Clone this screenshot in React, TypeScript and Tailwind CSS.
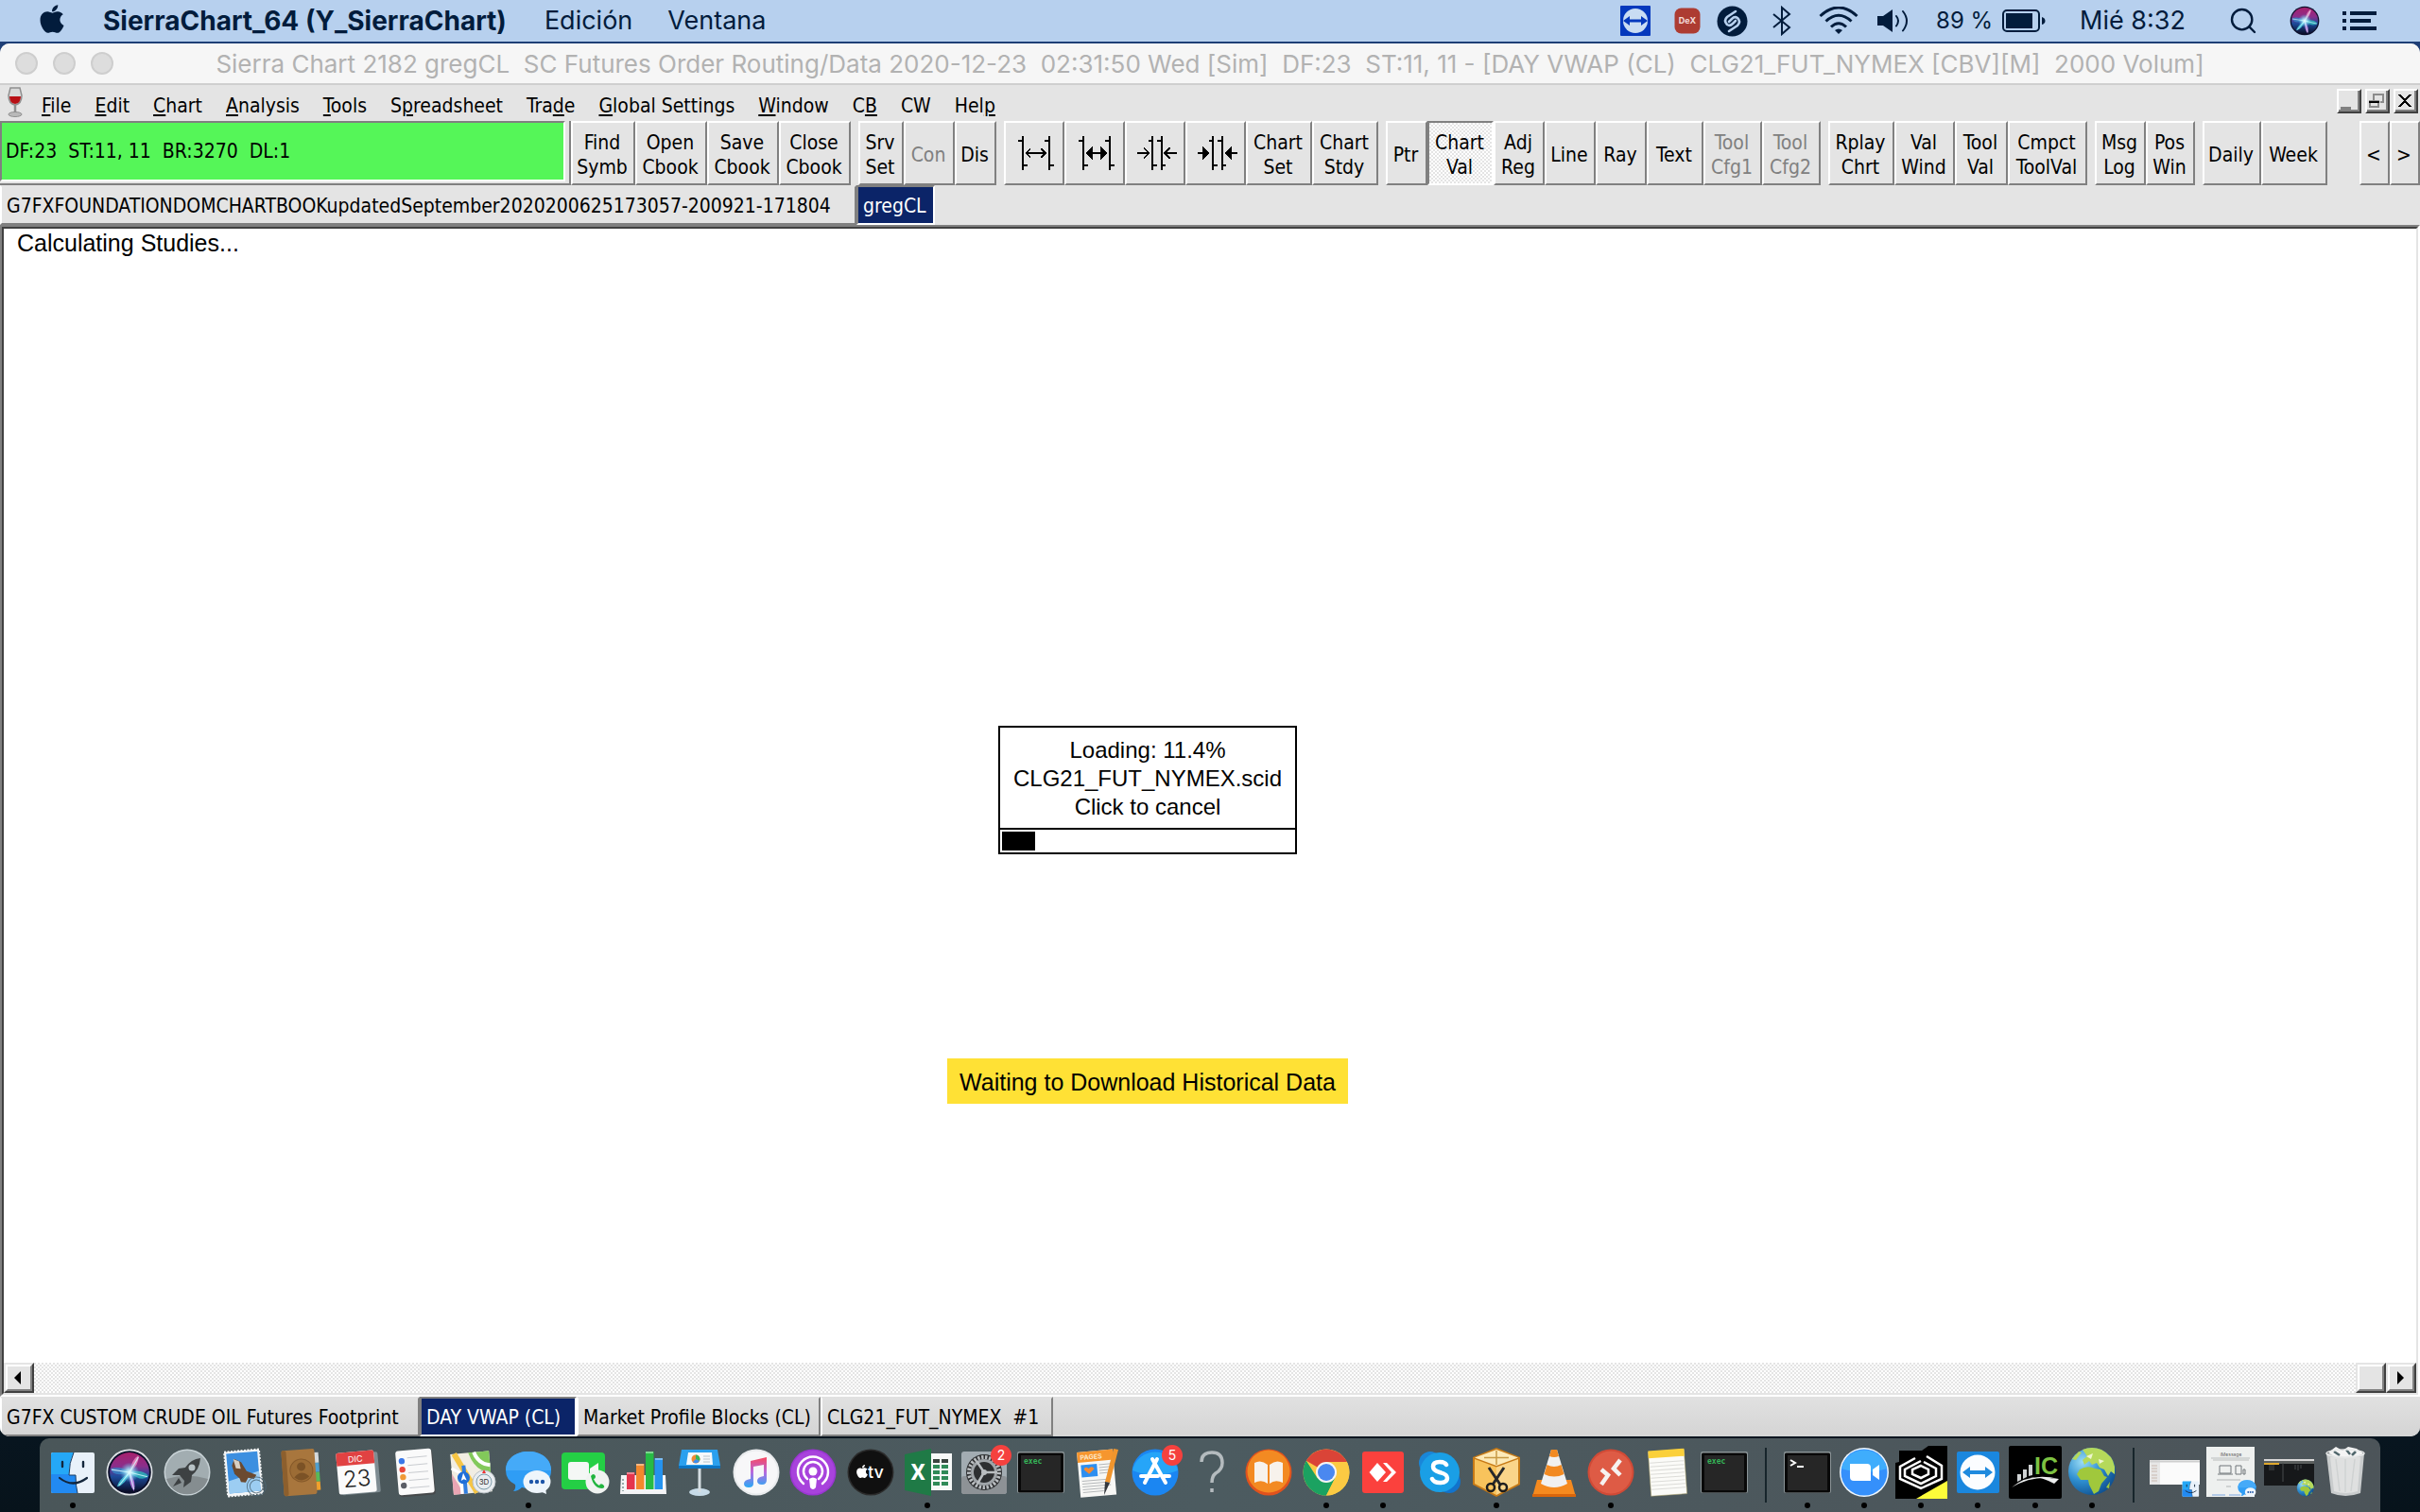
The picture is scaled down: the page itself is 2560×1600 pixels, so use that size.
import React from 'react';
import { FaApple } from 'react-icons/fa';
import { Search } from 'lucide-react';

const UI = "font-['DejaVu_Sans_Condensed','DejaVu_Sans',sans-serif]";
const MAC = "font-['Inter',sans-serif]";
const ARIAL = "font-['Liberation_Sans',Arial,sans-serif]";
const DITHER = 'bg-[conic-gradient(#ffffff_25%,#e4e4e4_0_50%,#ffffff_0_75%,#e4e4e4_0)] bg-[length:4px_4px]';

/* ---------- shared drawings ---------- */

const SiriOrb = ({ id, ring = '#0b0f2a' }: { id: string; ring?: string }) => (
  <>
    <defs>
      <linearGradient id={id} x1="0" y1="0" x2="0" y2="1">
        <stop offset="0" stopColor="#a81f6c" />
        <stop offset="0.35" stopColor="#8a2f8c" />
        <stop offset="0.6" stopColor="#1d4c9c" />
        <stop offset="1" stopColor="#0a0c26" />
      </linearGradient>
      <radialGradient id={`${id}Glow`}>
        <stop offset="0" stopColor="#ffffff" />
        <stop offset="0.35" stopColor="#aef2ff" stopOpacity="0.8" />
        <stop offset="1" stopColor="#58c8f0" stopOpacity="0" />
      </radialGradient>
    </defs>
    <circle cx="30" cy="30" r="24" fill={ring} />
    <circle cx="30" cy="30" r="22" fill={`url(#${id})`} />
    <path d="M30 30 Q20 22 9 26 Q12 36 30 30Z" fill="#2f9fd8" opacity="0.6" />
    <path d="M30 30 Q44 26 51 34 Q44 42 30 30Z" fill="#2fc8bf" opacity="0.7" />
    <path d="M30 30 Q32 16 40 11 Q41 22 30 30Z" fill="#f08fc4" opacity="0.8" />
    <path d="M30 30 Q18 38 16 46 Q26 44 30 30Z" fill="#4ad8e8" opacity="0.8" />
    <path d="M30 30 Q29 44 35 51 Q38 40 30 30Z" fill="#c77be8" opacity="0.85" />
    <circle cx="30" cy="30" r="11" fill={`url(#${id}Glow)`} />
    <path d="M10 27 L30 30 L50 35 M18 45 L30 30 L40 13 M30 30 L35 49" fill="none" stroke="#d8fbff" strokeWidth="1.200" opacity="0.8" />
  </>
);

const FinderFace = () => (
  <>
    <rect x="7" y="9" width="46" height="43" rx="2" fill="#e9f1fa" />
    <path d="M9 9 H31 Q26 20 26 33 H33 Q33 44 35 52 H9 Q7 52 7 50 V11 Q7 9 9 9Z" fill="#25a8f7" />
    <path d="M7 32 H26 V33 H33 Q33 44 35 52 H9 Q7 52 7 50Z" fill="#2277ee" opacity="0.6" />
    <path d="M31 9 Q26 20 26 33 H33 Q33 44 35 52" fill="none" stroke="#1d3d63" strokeWidth="1" />
    <path d="M19 19 V24 M41 19 V24" stroke="#13263c" strokeWidth="2.4" strokeLinecap="round" />
    <path d="M16 36 Q30 47 45 36" fill="none" stroke="#13263c" strokeWidth="2.2" strokeLinecap="round" />
  </>
);

const Globe = () => (
  <>
    <defs>
      <radialGradient id="sea" cx="0.3" cy="0.3" r="0.8">
        <stop offset="0" stopColor="#9adcf6" />
        <stop offset="0.5" stopColor="#2f8fd0" />
        <stop offset="1" stopColor="#0d4c8c" />
      </radialGradient>
    </defs>
    <circle cx="30" cy="29" r="25" fill="url(#sea)" />
    <path d="M20 6 Q30 2 40 6 Q52 12 54 24 L54 32 L50 29 L47 34 L43 27 L38 25 L35 20 L30 22 L27 18 L22 22 L20 17 L25 13Z" fill="#b5d95a" />
    <path d="M9 16 L16 8 L19 9 L13 17Z" fill="#b5d95a" />
    <path d="M17 27 Q25 22 33 26 L39 27 L43 34 L46 35 L40 42 L37 50 L32 53 L27 43 L26 38 L18 38 L14 32Z" fill="#a0c83c" />
    <path d="M45 46 L49 40 L48 47Z" fill="#a0c83c" />
    <path d="M24 13 L31 10 L29 16Z M37 16 L43 18 L38 21Z" fill="#eef6cf" />
  </>
);

const ExecIcon = () => (
  <>
    <rect x="5" y="8" width="50" height="44" rx="2" fill="#8b9497" />
    <rect x="6" y="9.500" width="48" height="42" rx="1.500" fill="#080808" />
    <rect x="9" y="12" width="42" height="37" fill="#262626" />
    <text x="12" y="21" fontSize="8" fontWeight="700" fill="#35b558" fontFamily="DejaVu Sans Mono, monospace">exec</text>
  </>
);

const Badge = ({ n }: { n: number }) => (
  <>
    <circle cx="48" cy="12" r="11" fill="#f5413e" />
    <text x="48" y="17" fontSize="14" textAnchor="middle" fill="#fff" fontFamily="Inter, sans-serif">{n}</text>
  </>
);

/* ---------- dock artwork, one drawing per 60x60 tile ---------- */

const Siri = () => (
  <>
    <circle cx="30" cy="30" r="24.500" fill="#dfe3e6" />
    <g transform="translate(1.5 1.5) scale(0.95)"><SiriOrb id="siriDock" /></g>
  </>
);

const Launchpad = () => (
  <>
    <circle cx="30" cy="30" r="24.500" fill="#c8d2d6" />
    <circle cx="30" cy="30" r="23" fill="#a2adb1" />
    <path d="M8 37 A23 23 0 0 0 52 37 Q30 30 8 37Z" fill="#858d90" />
    <path d="M44 15 Q34 16 28 25 L21 26 L14 33 L22 33 L27 39 L26 46 L34 40 L35 33 Q43 27 44 15Z" fill="#3d4143" />
    <circle cx="35" cy="25" r="3.500" fill="#b8c2c6" />
    <path d="M21 36 L15 45 L24 41Z" fill="#3d4143" />
  </>
);

const Mail = () => (
  <g transform="rotate(-5 30 30)">
    <rect x="11" y="7" width="37" height="47" fill="#f5f6f7" stroke="#f5f6f7" strokeWidth="2" strokeDasharray="2 1.500" />
    <rect x="13" y="9" width="33" height="42" fill="#3c8fe0" />
    <path d="M13 38 L46 30 V51 H13Z" fill="#9ccdf2" />
    <path d="M21 15 L28 19 L33 29 L43 34 L40 38 L34 36 L31 41 L26 40 L25 36 L20 31 L18 22Z" fill="#6b4a30" />
    <path d="M20 15 L26 18 L27 26 L22 25Z" fill="#d8cfc2" />
    <circle cx="42" cy="46" r="10" fill="none" stroke="#4d6675" strokeWidth="1" opacity="0.8" />
    <circle cx="42" cy="46" r="7" fill="none" stroke="#4d6675" strokeWidth="1" opacity="0.8" />
  </g>
);

const Contacts = () => (
  <g transform="rotate(-4 30 30)">
    <rect x="44" y="10" width="6" height="11" fill="#d5d9db" />
    <rect x="44" y="21" width="6" height="10" fill="#4f9fd0" />
    <rect x="44" y="31" width="6" height="10" fill="#59b957" />
    <rect x="44" y="41" width="6" height="9" fill="#f0a02c" />
    <rect x="11" y="6" width="35" height="48" rx="2" fill="#a8763d" />
    <rect x="11" y="6" width="5" height="48" rx="2" fill="#8d5f2d" />
    <circle cx="31" cy="28" r="12" fill="#9c6c35" stroke="#85592a" />
    <circle cx="31" cy="24" r="4.500" fill="#7b5226" />
    <path d="M23 35 Q31 26 39 35 Q31 42 23 35Z" fill="#7b5226" />
  </g>
);

const Calendar = () => (
  <g transform="rotate(-5 30 30)">
    <rect x="12" y="10" width="41" height="43" rx="2" fill="#7f8c92" />
    <rect x="9" y="8" width="40" height="44" rx="2" fill="#fbfbfb" />
    <path d="M9 22 V10 Q9 8 11 8 H47 Q49 8 49 10 V22Z" fill="#e14242" />
    <text x="29" y="19" fontSize="9" textAnchor="middle" fill="#fff" fontFamily="Inter, sans-serif">DIC</text>
    <text x="29" y="45" fontSize="24" fontWeight="300" textAnchor="middle" fill="#222" fontFamily="Inter, sans-serif">23</text>
  </g>
);

const Reminders = () => (
  <g transform="rotate(-5 30 30)">
    <rect x="12" y="8" width="38" height="47" rx="3" fill="#46494b" />
    <rect x="11" y="6" width="38" height="47" rx="3" fill="#fafafa" />
    <circle cx="17" cy="17" r="3.200" fill="#3a78e8" />
    <circle cx="17" cy="26" r="3.200" fill="#e8483c" />
    <circle cx="17" cy="34" r="3.200" fill="#f09a37" />
    <circle cx="17" cy="43" r="3.200" fill="#5b5e66" />
    <path d="M23 14 H44 M23 22 H44 M23 30 H44 M23 38 H44 M23 46 H44" stroke="#c9ccd0" strokeWidth="1" />
  </g>
);

const Maps = () => (
  <>
    <g transform="rotate(-5 30 30)">
      <rect x="9" y="9" width="41" height="43" fill="#f1ede2" />
      <path d="M28 9 H50 V32 Q34 30 28 9Z" fill="#82c95a" />
      <path d="M34 9 Q38 22 50 24" fill="none" stroke="#fff" strokeWidth="4" />
      <path d="M9 30 L20 52 H9Z" fill="#eaa5b4" />
      <path d="M13 9 L34 52" stroke="#f6c544" strokeWidth="6" />
      <path d="M9 24 L18 30 V52" fill="none" stroke="#fff" strokeWidth="3" />
      <path d="M22 22 V52" stroke="#2f7de0" strokeWidth="4" />
      <circle cx="21" cy="35" r="6.500" fill="#1f6fd8" />
      <path d="M21 30 L24 38 L21 36.500 L18 38Z" fill="#fff" />
    </g>
    <circle cx="43" cy="40" r="12" fill="#e9edf0" stroke="#b9c0c5" />
    <circle cx="43" cy="40" r="8" fill="none" stroke="#7d9cab" strokeWidth="1" />
    <text x="43" y="43" fontSize="8" textAnchor="middle" fill="#333" fontFamily="Inter, sans-serif">3D</text>
    <path d="M43 27 L45 31 H41Z" fill="#e33" />
  </>
);

const Messages = () => (
  <>
    <path d="M30 8 C44 8 54 16 54 28 C54 40 44 47 30 47 Q26 47 23 46 Q19 50 14 50 Q17 47 16 43 Q6 38 6 28 C6 16 16 8 30 8Z" fill="#2f9df5" />
    <path d="M30 8 C44 8 54 16 54 28 H6 C6 16 16 8 30 8Z" fill="#45aaf8" />
    <ellipse cx="39" cy="40" rx="14.500" ry="12" fill="#eef5fb" />
    <path d="M42 50 L49 53 L48 46Z" fill="#eef5fb" />
    <circle cx="33" cy="40" r="2.200" fill="#1d55a8" />
    <circle cx="39" cy="40" r="2.200" fill="#1d55a8" />
    <circle cx="45" cy="40" r="2.200" fill="#1d55a8" />
  </>
);

const FaceTime = () => (
  <>
    <rect x="5" y="9" width="46" height="39" rx="4" fill="#24cf45" />
    <rect x="12" y="19" width="22" height="19" rx="3" fill="#f4f7f5" />
    <path d="M35 26 L44 20 V37 L35 32Z" fill="#f4f7f5" />
    <circle cx="43" cy="40" r="12.500" fill="#f0f3f1" />
    <path d="M36 34 q3 -4 5 0 q0 3 -2 3 q2 5 6 7 q1 -3 4 -1 q3 3 -1 4 q-9 0 -12 -13Z" fill="#21b53f" />
  </>
);

const Numbers = () => (
  <>
    <path d="M7 33 H54 L55 53 H6Z" fill="#f4f4f6" />
    <path d="M9 37 V50" stroke="#9aa" strokeWidth="2" strokeDasharray="2 2" />
    <rect x="13" y="30" width="8.500" height="18" fill="#e5354d" />
    <rect x="23" y="21" width="8.500" height="27" fill="#f2882d" />
    <rect x="33" y="8" width="8.500" height="40" fill="#27bb45" />
    <rect x="42.500" y="15" width="8.500" height="33" fill="#2593ef" />
    <path d="M13 31 H21 M23 22 H31 M33 9 H41 M43 16 H51" stroke="#fff" strokeWidth="2" opacity="0.4" />
  </>
);

const Keynote = () => (
  <>
    <ellipse cx="30" cy="51" rx="11" ry="4" fill="#c7dbe8" />
    <rect x="28.500" y="26" width="3" height="25" fill="#d5dde2" />
    <path d="M11 6 H49 L52 23 V26 H8 V23Z" fill="#2ba0ee" />
    <path d="M8 23 H52 V26 H8Z" fill="#0d74c2" />
    <path d="M18 9 H43 L44 22 H16Z" fill="#f5f8fa" />
    <circle cx="26" cy="16" r="4.500" fill="#f08a35" />
    <path d="M26 16 V11.500 A4.500 4.500 0 0 1 30 18Z" fill="#35b65b" />
    <path d="M26 16 L30 18 A4.500 4.500 0 0 1 23 19Z" fill="#3d8ff0" />
    <path d="M34 13 H41 M34 16 H41 M34 19 H41" stroke="#b8c4cc" strokeWidth="1" />
  </>
);

const Music = () => (
  <>
    <defs>
      <linearGradient id="note" x1="0" y1="0" x2="0" y2="1">
        <stop offset="0" stopColor="#f9475f" />
        <stop offset="0.5" stopColor="#b66ae0" />
        <stop offset="1" stopColor="#28a9f5" />
      </linearGradient>
    </defs>
    <circle cx="30" cy="30" r="24.500" fill="#e9ebed" />
    <circle cx="30" cy="30" r="22.500" fill="#f7f7f9" />
    <path d="M24 18 L41 14 V38 Q41 43 36 43 Q31 43 31 39 Q31 35 38 34 V22 L27 24 V42 Q27 46 22 46 Q17 46 17 42 Q17 38 24 37Z" fill="url(#note)" />
  </>
);

const Podcasts = () => (
  <>
    <circle cx="30" cy="30" r="24.500" fill="#9a35d2" />
    <circle cx="30" cy="30" r="23" fill="#a843dc" />
    <path d="M20 42 A16 16 0 1 1 40 42" fill="none" stroke="#fff" strokeWidth="2.500" strokeLinecap="round" />
    <path d="M24 37 A10 10 0 1 1 36 37" fill="none" stroke="#fff" strokeWidth="2.500" strokeLinecap="round" />
    <circle cx="30" cy="29" r="4.500" fill="#fff" />
    <path d="M26 37 Q30 34 34 37 L33 46 Q30 50 27 46Z" fill="#fff" />
  </>
);

const AppleTv = () => (
  <>
    <circle cx="30" cy="30" r="24.500" fill="#2b2b2b" />
    <circle cx="30" cy="30" r="23" fill="#101010" />
    <FaApple x="13" y="21" width="15" height="16" color="#fff" />
    <text x="27" y="36" fontSize="18" fontWeight="500" fill="#fff" fontFamily="Inter, sans-serif">tv</text>
  </>
);

const Excel = () => (
  <>
    <rect x="30" y="10" width="26" height="39" fill="#f7f9f8" />
    <g fill="#2f8a57">
      <rect x="36" y="22" width="7" height="4" /><rect x="45" y="22" width="7" height="4" />
      <rect x="36" y="28" width="7" height="4" /><rect x="45" y="28" width="7" height="4" />
      <rect x="36" y="34" width="7" height="4" /><rect x="45" y="34" width="7" height="4" />
      <rect x="36" y="40" width="7" height="4" /><rect x="45" y="40" width="7" height="4" />
    </g>
    <path d="M36 16 H43 V20 H36Z M45 16 H52 V20 H45Z" fill="#3b4540" />
    <path d="M6 11 L34 5 V55 L6 49Z" fill="#1f7a46" />
    <text x="20" y="38" fontSize="24" fontWeight="700" textAnchor="middle" fill="#fff" fontFamily="Roboto, sans-serif">X</text>
  </>
);

const Preferences = () => (
  <>
    <rect x="6" y="8" width="48" height="45" rx="3" fill="#a2acb2" />
    <rect x="6" y="34" width="48" height="19" rx="3" fill="#8d9296" />
    <circle cx="30" cy="30" r="19" fill="#2d2f31" />
    <circle cx="30" cy="30" r="16" fill="none" stroke="#b9bdc0" strokeWidth="4" strokeDasharray="2.400 1.600" />
    <circle cx="30" cy="30" r="12.500" fill="none" stroke="#9fa4a8" strokeWidth="3" />
    <circle cx="30" cy="30" r="3" fill="#b9bdc0" />
    <path d="M30 30 L22 18 M30 30 L44 30 M30 30 L23 42" stroke="#b9bdc0" strokeWidth="2.500" />
    <Badge n={2} />
  </>
);

const Pages = () => (
  <>
    <g transform="rotate(-5 30 30)">
      <rect x="9" y="7" width="38" height="48" fill="#f7f7f5" />
      <rect x="9" y="7" width="38" height="11" fill="#f6962e" />
      <text x="12" y="15.500" fontSize="7" fontWeight="700" fill="#fde6c6" fontFamily="Inter, sans-serif">PAGES</text>
      <rect x="12" y="21" width="17" height="13" fill="#2d8ff0" />
      <path d="M20 31 L15 26 Q16 22 20 25 Q24 22 26 26Z" fill="#f58a30" />
      <path d="M31 22 H44 M31 25 H44 M31 28 H44 M31 31 H44 M12 38 H42 M12 41 H42 M12 44 H42 M12 47 H36 M12 50 H34" stroke="#b5b8ba" strokeWidth="1" />
    </g>
    <path d="M46 5 L51 6 L42 41 L37 40Z" fill="#f0952d" />
    <path d="M37 40 L42 41 L36 54Z" fill="#33373c" />
  </>
);

const AppStore = () => (
  <>
    <circle cx="30" cy="30" r="24.500" fill="#1b86f2" />
    <path d="M6 28 A24.500 24.500 0 0 1 54 28 Q30 38 6 28Z" fill="#26a5f8" />
    <path d="M32 16 L19 41 M27 16 L41 41 M15 34 H33 M39 34 H45" stroke="#fff" strokeWidth="4" strokeLinecap="round" />
    <Badge n={5} />
  </>
);

const Help = () => (
  <path d="M19 19 Q19 9 30 9 Q41 9 41 20 Q41 27 34 31 Q30 34 30 41 M30 47 V51" fill="none" stroke="#b4bbbe" strokeWidth="3.500" />
);

const Books = () => (
  <>
    <circle cx="30" cy="30" r="24.500" fill="#e0521d" />
    <circle cx="30" cy="29" r="22.500" fill="#f38a22" />
    <path d="M29 22 Q22 16 15 20 V41 Q23 37 29 42Z" fill="#f7f2ec" />
    <path d="M31 22 Q38 16 45 20 V41 Q37 37 31 42Z" fill="#f7f2ec" />
  </>
);

const Chrome = () => (
  <>
    <circle cx="30" cy="30" r="24.500" fill="#fbca43" />
    <path d="M30 30 L8.800 17.800 A24.500 24.500 0 0 1 51.200 17.800Z" fill="#da4437" />
    <path d="M30 19 H51.800 L50 16 H30Z" fill="#da4437" />
    <path d="M8.800 17.800 L20.500 36 L30 41 L30 54.500 A24.500 24.500 0 0 1 8.800 17.800Z" fill="#1ba261" />
    <path d="M39.500 36 L30 54.500 L22 38Z" fill="#1ba261" />
    <path d="M39.500 35.500 L30 54.500 A24.500 24.500 0 0 0 51.800 19 H30Z" fill="#fbca43" />
    <circle cx="30" cy="30" r="11" fill="#f5f5f5" />
    <circle cx="30" cy="30" r="9" fill="#4a88f0" />
  </>
);

const AnyDesk = () => (
  <>
    <rect x="8" y="8" width="44" height="44" rx="3" fill="#fb413d" />
    <path d="M24 20 L33 30 L24 40 L15.500 30Z" fill="#fff" />
    <path d="M30 20 H34 L44 30 L34 40 H30 L39 30Z" fill="#fff" />
  </>
);

const Skype = () => (
  <>
    <circle cx="20" cy="20" r="12" fill="#1a86d8" />
    <circle cx="40" cy="40" r="12" fill="#1273cc" />
    <circle cx="30" cy="30" r="21" fill="#1a9fe6" />
    <path d="M37 22 Q35 19 30 19 Q23 19 23 24 Q23 28 30 30 Q38 32 38 36 Q38 41 30 41 Q24 41 22 37" fill="none" stroke="#fff" strokeWidth="4.500" strokeLinecap="round" />
  </>
);

const Scissors = () => (
  <>
    <path d="M30 4 L55 14 V43 L30 56 L5 43 V14Z" fill="#c77a16" />
    <path d="M30 6 L53 14.500 L30 23 L7 14.500Z" fill="#fdeab8" />
    <path d="M7 16 L30 24.500 V54 L7 42Z" fill="#f8c35c" />
    <path d="M53 16 L30 24.500 V54 L53 42Z" fill="#fad58a" />
    <path d="M30 7 V22 M17 14.500 H43" stroke="#c79a44" strokeWidth="1.500" />
    <path d="M22 25 L34 43 M38 25 L26 43" stroke="#26282a" strokeWidth="3" />
    <circle cx="24" cy="46" r="4" fill="none" stroke="#1d1d1d" strokeWidth="2.500" />
    <circle cx="37" cy="46" r="4" fill="none" stroke="#1d1d1d" strokeWidth="2.500" />
  </>
);

const Vlc = () => (
  <>
    <path d="M12 38 H48 L53 56 H7Z" fill="#f58a1f" />
    <path d="M7 53 H53 V56 H7Z" fill="#d9660c" />
    <path d="M27 6 H33 L44 42 Q30 50 16 42Z" fill="#f1f1f1" />
    <path d="M27 6 H33 L35 13 Q30 15 25 13Z" fill="#f28a22" />
    <path d="M22.500 22 Q30 26 37.500 22 L40.500 32 Q30 37 19.500 32Z" fill="#f28a22" />
  </>
);

const RemoteDesktop = () => (
  <>
    <circle cx="30" cy="30" r="24.500" fill="#d04a36" />
    <circle cx="30" cy="30" r="22.500" fill="#de5b45" />
    <path d="M20 27 L27 33 L20 43" fill="none" stroke="#f6f1f0" strokeWidth="4.500" />
    <path d="M40 17 L33 26 L40 33" fill="none" stroke="#f6f1f0" strokeWidth="4.500" />
  </>
);

const Notes = () => (
  <g transform="rotate(-4 30 30)">
    <rect x="11" y="7" width="38" height="47" fill="#fbfbf8" stroke="#a79b60" strokeWidth="0.500" />
    <rect x="11" y="6" width="38" height="8" fill="#fbd03a" />
    <path d="M12 19 H48 M12 23 H48 M12 27 H48 M12 31 H48 M12 35 H48 M12 39 H48 M12 43 H48 M12 47 H48" stroke="#dcdcd8" strokeWidth="1" />
  </g>
);

const Terminal = () => (
  <>
    <rect x="5" y="8" width="50" height="44" rx="2" fill="#8b9497" />
    <rect x="6" y="9.500" width="48" height="42" rx="1.500" fill="#080808" />
    <rect x="9" y="12" width="42" height="37" fill="#262626" />
    <path d="M12 17 L17 20 L12 23 M19 24 H26" fill="none" stroke="#fff" strokeWidth="2" />
  </>
);

const Zoom = () => (
  <>
    <circle cx="30" cy="30" r="26" fill="#eef6fd" />
    <circle cx="30" cy="30" r="24.500" fill="#3590fb" />
    <path d="M6 26 A24.500 24.500 0 0 1 54 26 Q30 34 6 26Z" fill="#3fadfc" />
    <path d="M15 21 H33 Q37 21 37 25 V39 H19 Q15 39 15 35Z" fill="#fff" />
    <path d="M39 27 L46 22 V38 L39 33Z" fill="#fff" />
  </>
);

const CubeApp = () => (
  <>
    <path d="M7 7 H31 L38 2 H58 V58 H3 V20 L7 19Z" fill="#000" />
    <path d="M58 39 V58 H25Z" fill="#fdfc3a" />
    <path d="M36 13 L52 23 V37 L30 47 L8 37 V24 L24 15 M30 18 L13 27 V34 L30 42 L46 34 V26 L33 19" fill="none" stroke="#fff" strokeWidth="2.500" />
    <path d="M30 23 L38 27 V32 L30 36 L21 32 V27Z" fill="none" stroke="#fff" strokeWidth="2.500" />
  </>
);

const TeamViewer = () => (
  <>
    <rect x="8" y="8" width="45" height="44" rx="2" fill="#1a87de" />
    <circle cx="30" cy="30" r="18.500" fill="#fbfdff" />
    <path d="M14 30 L22 24 V28 H38 V24 L46 30 L38 36 V32 H22 V36Z" fill="#1f8ade" />
  </>
);

const IcMarkets = () => (
  <>
    <rect x="2" y="2" width="56" height="56" rx="2" fill="#000" />
    <path d="M11 32 H15 V38 L11 40Z M17 27 H21 V35 L17 37Z M23 22 H27 V33 L23 34Z" fill="#d0d3d4" />
    <text x="29" y="32" fontSize="25" fontWeight="700" fill="#7dc242" fontFamily="Liberation Sans, sans-serif">IC</text>
    <path d="M5 46 Q24 30 55 37 Q28 32 5 46Z M24 35 Q40 35 55 37 L50 42 Q36 34 24 35Z" fill="#eceeee" />
  </>
);

const FinderWindow = () => (
  <>
    <rect x="4" y="17" width="53" height="26" fill="#fbfbfb" />
    <rect x="4" y="17" width="11" height="26" fill="#e7e7e7" />
    <path d="M4 18.500 H57" stroke="#cfcfcf" strokeWidth="2" />
    <path d="M6 23 H12 M6 26 H12 M6 29 H12 M6 33 H12 M6 36 H12 M6 39 H12" stroke="#c9b8ae" strokeWidth="1" />
    <g transform="translate(36 36) scale(0.38)"><FinderFace /></g>
  </>
);

const MessageWindow = () => (
  <>
    <rect x="4" y="3" width="51" height="53" fill="#eef0ef" />
    <text x="30" y="13" fontSize="5" textAnchor="middle" fill="#666" fontFamily="Inter, sans-serif">iMessage</text>
    <path d="M9 15 H50 M11 17 H49" stroke="#b9bcbc" strokeWidth="1" />
    <path d="M18 23 H30 V31 H18Z M16 32 H32 M35 23 H41 V32 H35Z M43 27 H45 V32 H43Z" fill="none" stroke="#70767a" strokeWidth="1" />
    <path d="M15 38 H40 M25 45 H30" stroke="#b0b4b5" strokeWidth="1" />
    <path d="M10 54 H24 M28 54 H40" stroke="#7ba6e0" strokeWidth="1" />
    <g transform="translate(35 35) scale(0.4)"><Messages /></g>
  </>
);

const ChartWindow = () => (
  <>
    <rect x="4" y="16" width="53" height="28" fill="#16181a" />
    <rect x="4" y="16" width="53" height="2" fill="#d8d8d8" />
    <rect x="4" y="18" width="53" height="3" fill="#5c605f" />
    <rect x="4" y="20" width="16" height="2" fill="#e0a92e" />
    <path d="M10 22 V28 M12 22 V28 M14 22 V28 M24 20 V40 M37 22 V27 M40 22 V28 M43 22 V26" stroke="#474b4d" strokeWidth="1" />
    <g transform="translate(37 36) scale(0.36)"><Globe /></g>
  </>
);

const Trash = () => (
  <>
    <path d="M10 10 L50 10 L46 52 Q30 58 15 52Z" fill="#c9cccd" />
    <path d="M14 14 L46 14 L43 50 Q30 54 18 50Z" fill="#dfe0e0" />
    <path d="M20 16 L24 50 M30 16 V51 M40 16 L36 50" stroke="#cfd2d2" strokeWidth="1.500" />
    <path d="M12 9 L20 3 L27 7 L33 3 L42 5 L49 10 L40 14 L20 14Z" fill="#f4f4f4" />
    <path d="M18 8 L24 12 M31 6 L35 11 M41 8 L37 12" stroke="#50676c" strokeWidth="2.500" />
    <ellipse cx="30" cy="10" rx="20" ry="4" fill="none" stroke="#e6e8e8" strokeWidth="1.500" />
  </>
);

type DockApp = { name: string; Art: () => React.ReactNode; running?: boolean };

const dockGroups: DockApp[][] = [
  [
    { name: 'Finder', Art: FinderFace, running: true },
    { name: 'Siri', Art: Siri },
    { name: 'Launchpad', Art: Launchpad },
    { name: 'Mail', Art: Mail },
    { name: 'Contactos', Art: Contacts },
    { name: 'Calendario', Art: Calendar },
    { name: 'Recordatorios', Art: Reminders },
    { name: 'Mapas', Art: Maps },
    { name: 'Mensajes', Art: Messages, running: true },
    { name: 'FaceTime', Art: FaceTime },
    { name: 'Numbers', Art: Numbers },
    { name: 'Keynote', Art: Keynote },
    { name: 'Música', Art: Music },
    { name: 'Podcasts', Art: Podcasts },
    { name: 'TV', Art: AppleTv },
    { name: 'Excel', Art: Excel, running: true },
    { name: 'Preferencias', Art: Preferences },
    { name: 'exec', Art: ExecIcon },
    { name: 'Pages', Art: Pages },
    { name: 'App Store', Art: AppStore },
    { name: 'Ayuda', Art: Help },
    { name: 'Libros', Art: Books },
    { name: 'Chrome', Art: Chrome, running: true },
    { name: 'AnyDesk', Art: AnyDesk, running: true },
    { name: 'Skype', Art: Skype },
    { name: 'Snip', Art: Scissors, running: true },
    { name: 'VLC', Art: Vlc },
    { name: 'Remote Desktop', Art: RemoteDesktop, running: true },
    { name: 'Notas', Art: Notes },
    { name: 'exec 2', Art: ExecIcon },
  ],
  [
    { name: 'Terminal', Art: Terminal, running: true },
    { name: 'Zoom', Art: Zoom, running: true },
    { name: 'Cube', Art: CubeApp, running: true },
    { name: 'TeamViewer', Art: TeamViewer, running: true },
    { name: 'IC Markets', Art: IcMarkets, running: true },
    { name: 'SierraChart', Art: Globe, running: true },
  ],
  [
    { name: 'Ventana de Finder', Art: FinderWindow },
    { name: 'Ventana de iMessage', Art: MessageWindow },
    { name: 'Ventana de SierraChart', Art: ChartWindow },
    { name: 'Papelera', Art: Trash },
  ],
];

const Dock = () => (
  <nav aria-label="Dock" className="mx-[42px] mt-0.5 flex h-[78px] rounded-t-[10px] bg-linear-to-r from-[#4a5659] via-[#4c5b60] to-[#4c5459] pl-[5px] pr-[7px]">
    {dockGroups.map((apps, i) => (
      <React.Fragment key={i}>
        {i > 0 && (
          <div className="flex w-[27px] justify-center pt-2.5">
            <div className="h-[58px] w-0.5 bg-[#17252b]" />
          </div>
        )}
        {apps.map(({ name, Art, running }) => (
          <button key={name} aria-label={name} className="flex flex-1 flex-col items-center pt-1.5">
            <svg width="60" height="60" viewBox="0 0 60 60"><Art /></svg>
            {running && <span className="mt-0.5 size-1.5 rounded-full bg-black" />}
          </button>
        ))}
      </React.Fragment>
    ))}
  </nav>
);

/* ---------- mac menu bar ---------- */

const MenuBar = () => (
  <header className={`${MAC} flex h-11 items-center bg-[#b7d0ee] pl-[41px] pr-[46px] text-[27px] text-[#021c3c]`}>
    <FaApple className="mb-1 h-[34px] w-7" />
    <span className="ml-10 text-[28px] font-bold">SierraChart_64 (Y_SierraChart)</span>
    <span className="ml-10">Edición</span>
    <span className="ml-[37px]">Ventana</span>

    <div className="ml-auto flex items-center">
      <svg width="32" height="32" viewBox="0 0 32 32">
        <rect width="32" height="32" rx="1" fill="#0438bd" />
        <circle cx="16" cy="16" r="13" fill="#c9dcf3" />
        <path d="M3 16 L10 11 V14.500 H22 V11 L29 16 L22 21 V17.500 H10 V21Z" fill="#0438bd" />
      </svg>
      <svg className="ml-[25px]" width="28" height="28" viewBox="0 0 28 28">
        <rect x="0.500" y="0.500" width="27" height="27" rx="7" fill="#ad3c32" />
        <text x="14" y="17" fontSize="9" fontWeight="700" textAnchor="middle" fill="#f3dcda" fontFamily="Inter, sans-serif">DeX</text>
      </svg>
      <svg className="ml-[17px]" width="33" height="33" viewBox="0 0 33 33">
        <circle cx="16.500" cy="16.500" r="16" fill="#021c3c" />
        <path d="M20 6 L11 12 Q7 16 11 20 Q14 22 17 19 L20 16" fill="none" stroke="#b7d0ee" strokeWidth="2.600" strokeLinecap="round" />
        <path d="M13 27 L22 21 Q26 17 22 13 Q19 11 16 14 L13 17" fill="none" stroke="#b7d0ee" strokeWidth="2.600" strokeLinecap="round" />
      </svg>
      <svg className="ml-[26px]" width="20" height="32" viewBox="0 0 20 32">
        <path d="M1 9 L18 23 L10 30 V2 L18 9 L1 23" fill="none" stroke="#021c3c" strokeWidth="2" />
      </svg>
      <svg className="ml-[29px]" width="42" height="30" viewBox="0 0 42 30">
        <path d="M1.500 10 Q21 -8 40.500 10 M7.500 15.500 Q21 3 34.500 15.500 M13 21.500 Q21 14 29 21.500" fill="none" stroke="#021c3c" strokeWidth="3" />
        <path d="M17 25 Q21 22 25 25 L21 29Z" fill="#021c3c" />
      </svg>
      <svg className="ml-5" width="34" height="26" viewBox="0 0 34 26">
        <path d="M0 8 H6 L16 1 V25 L6 18 H0Z" fill="#021c3c" />
        <path d="M20 8 Q24 13 20 18.500 M27 3 Q35 13 27 23.500" fill="none" stroke="#021c3c" strokeWidth="2" strokeLinecap="round" />
      </svg>
      <span className="ml-7 text-2xl">89 %</span>
      <svg className="ml-2.5" width="46" height="24" viewBox="0 0 46 24">
        <rect x="1" y="1" width="38" height="22" rx="4" fill="none" stroke="#021c3c" strokeWidth="2" />
        <rect x="4" y="4" width="28" height="16" fill="#021c3c" />
        <path d="M42 8 Q45.500 9 45.500 12 Q45.500 15 42 16Z" fill="#021c3c" />
      </svg>
      <span className="ml-9">Mié 8:32</span>
      <Search className="ml-[45px] size-8" strokeWidth={1.8} />
      <svg className="ml-[33px]" width="32" height="32" viewBox="5 5 50 50"><SiriOrb id="siriBar" /></svg>
      <svg className="ml-6" width="36" height="20" viewBox="0 0 36 20">
        <path d="M0 2 H4 M8 2 H36 M0 10 H4 M8 10 H30 M0 18 H4 M8 18 H36" stroke="#021c3c" strokeWidth="4" />
      </svg>
    </div>
  </header>
);

/* ---------- Sierra Chart window ---------- */

const TitleBar = () => (
  <div className={`${MAC} flex h-11 items-center border-b-2 border-[#cfcfcf] bg-[#f6f6f6] px-4 text-[26px] text-[#b2b2b2]`}>
    <div className="flex flex-1 gap-4">
      {['Cerrar', 'Minimizar', 'Ampliar'].map((label) => (
        <button key={label} aria-label={label} className="size-6 rounded-full border-2 border-[#cecece] bg-[#dddddd]" />
      ))}
    </div>
    <h1 className="whitespace-pre">
      {'Sierra Chart 2182 gregCL  SC Futures Order Routing/Data 2020-12-23  02:31:50 Wed [Sim]  DF:23  ST:11, 11 - [DAY VWAP (CL)  CLG21_FUT_NYMEX [CBV][M]  2000 Volum]'}
    </h1>
    <div className="flex-1" />
  </div>
);

// "&" goes before the mnemonic letter
const menus = ['&File', '&Edit', '&Chart', '&Analysis', '&Tools', 'S&preadsheet', 'Tra&de', '&Global Settings', '&Window', 'C&B', 'CW', 'Hel&p'];

const MenuLabel = ({ text }: { text: string }) => {
  const at = text.indexOf('&');
  if (at < 0) return <>{text}</>;
  return (
    <>
      {text.slice(0, at)}
      <u className="decoration-2 underline-offset-2">{text[at + 1]}</u>
      {text.slice(at + 2)}
    </>
  );
};

const MdiButton = ({ label, children }: { label: string; children: React.ReactNode }) => (
  <button aria-label={label} className="size-[26px] border-2 border-t-white border-l-white border-r-[#404040] border-b-[#404040] bg-[#e4e4e4]">
    <svg width="22" height="22" viewBox="0 0 22 22" shapeRendering="crispEdges">
      <path d="M21 0 V21 H0" fill="none" stroke="#808080" strokeWidth="2" />
      {children}
    </svg>
  </button>
);

const AppMenu = () => (
  <div className="flex h-[38px] items-start pl-2 pr-0.5">
    <svg className="mt-0.5" width="16" height="32" viewBox="0 0 16 32">
      <path d="M3 1 H13 L15 9 Q15 18 8 19 Q1 18 1 9Z" fill="#d8d8d8" stroke="#8f8f8f" strokeWidth="1.500" />
      <path d="M2 10 H14 Q14 17 8 18 Q2 17 2 10Z" fill="#b80f14" />
      <path d="M8 19 V28" stroke="#8f8f8f" strokeWidth="2.500" />
      <ellipse cx="8" cy="29" rx="7" ry="2.500" fill="#b9b9b9" stroke="#8f8f8f" />
    </svg>
    <nav className="ml-5 flex gap-[25px] pt-2 leading-7">
      {menus.map((m) => (
        <button key={m}><MenuLabel text={m} /></button>
      ))}
    </nav>
    <div className="ml-auto flex gap-1 pt-1">
      <MdiButton label="Minimize"><path d="M2 18 H13" stroke="#808080" strokeWidth="3" /></MdiButton>
      <MdiButton label="Restore">
        <path d="M7 10 V4 H17 V12 H14 M3 16 V11 H12 V17 H3Z" fill="none" stroke="#8c8c8c" strokeWidth="2" />
        <path d="M2 12 H13" stroke="#000" strokeWidth="2" />
      </MdiButton>
      <MdiButton label="Close"><path d="M4 4 L16 17 M16 4 L4 17" stroke="#000" strokeWidth="2" /></MdiButton>
    </div>
  </div>
);

// The four bar spacing drawings: two price bars with arrows between or beside them
const WidenBars = ({ bold }: { bold?: boolean }) => (
  <svg width="64" height="66" viewBox="0 0 64 66" shapeRendering="crispEdges" aria-hidden="true">
    <path d="M19 14 V52 M14 19 H19 M19 47 H24 M49 14 V52 M44 19 H49 M49 47 H54" stroke="#000" strokeWidth="2" />
    <path d="M22 33 H46" stroke="#000" strokeWidth="2" />
    {bold ? (
      <path d="M22 33 L29 26 V40Z M46 33 L39 26 V40Z" stroke="#000" />
    ) : (
      <path d="M28 28 L23 33 L28 38 M40 28 L45 33 L40 38" fill="none" stroke="#000" strokeWidth="2" />
    )}
  </svg>
);

const NarrowBars = ({ bold }: { bold?: boolean }) => (
  <svg width="64" height="66" viewBox="0 0 64 66" shapeRendering="crispEdges" aria-hidden="true">
    <path d="M29 14 V52 M24 19 H29 M29 47 H34 M39 14 V52 M34 19 H39 M39 47 H44" stroke="#000" strokeWidth="2" />
    <path d="M12 33 H25 M43 33 H56" stroke="#000" strokeWidth="2" />
    {bold ? (
      <path d="M25 33 L18 26 V40Z M43 33 L50 26 V40Z" stroke="#000" />
    ) : (
      <path d="M19 27 L25 33 L19 39 M49 27 L43 33 L49 39" fill="none" stroke="#000" strokeWidth="2" />
    )}
  </svg>
);

type Tool = { label: string; width: string; state?: 'off' | 'down'; icon?: React.ReactNode };

const toolGroups: Tool[][] = [
  [
    { label: 'Find Symb', width: 'w-[68px]' },
    { label: 'Open Cbook', width: 'w-[76px]' },
    { label: 'Save Cbook', width: 'w-[76px]' },
    { label: 'Close Cbook', width: 'w-[76px]' },
  ],
  [
    { label: 'Srv Set', width: 'w-12' },
    { label: 'Con', width: 'w-[54px]', state: 'off' },
    { label: 'Dis', width: 'w-11' },
  ],
  [
    { label: 'Increase bar spacing', width: 'w-16', icon: <WidenBars /> },
    { label: 'Increase bar spacing more', width: 'w-16', icon: <WidenBars bold /> },
    { label: 'Decrease bar spacing', width: 'w-16', icon: <NarrowBars /> },
    { label: 'Decrease bar spacing more', width: 'w-16', icon: <NarrowBars bold /> },
    { label: 'Chart Set', width: 'w-[70px]' },
    { label: 'Chart Stdy', width: 'w-[70px]' },
  ],
  [
    { label: 'Ptr', width: 'w-11' },
    { label: 'Chart Val', width: 'w-[70px]', state: 'down' },
    { label: 'Adj Reg', width: 'w-[54px]' },
    { label: 'Line', width: 'w-[54px]' },
    { label: 'Ray', width: 'w-[54px]' },
    { label: 'Text', width: 'w-[60px]' },
    { label: 'Tool Cfg1', width: 'w-[62px]', state: 'off' },
    { label: 'Tool Cfg2', width: 'w-[62px]', state: 'off' },
  ],
  [
    { label: 'Rplay Chrt', width: 'w-[70px]' },
    { label: 'Val Wind', width: 'w-16' },
    { label: 'Tool Val', width: 'w-14' },
    { label: 'Cmpct ToolVal', width: 'w-[84px]' },
  ],
  [
    { label: 'Msg Log', width: 'w-[54px]' },
    { label: 'Pos Win', width: 'w-[52px]' },
  ],
  [
    { label: 'Daily', width: 'w-[62px]' },
    { label: 'Week', width: 'w-[70px]' },
  ],
];

const ToolButton = ({ label, width, state, icon }: Tool) => (
  <button
    aria-label={icon ? label : undefined}
    aria-pressed={state === 'down' || undefined}
    disabled={state === 'off'}
    className={`${width} flex h-[68px] shrink-0 items-center justify-center border-2 leading-[26px]
      ${state === 'off' ? 'text-[#808080]' : 'text-black'}
      ${state === 'down'
        ? `border-t-[#808080] border-l-[#808080] border-r-white border-b-white ${DITHER}`
        : 'border-t-white border-l-white border-r-[#808080] border-b-[#808080]'}
    `}
  >
    {icon ?? (
      <span className="pt-1 pr-0.5">
        {label.split(' ').map((line) => <span key={line} className="block">{line}</span>)}
      </span>
    )}
  </button>
);

const Toolbar = () => (
  <div className="flex h-[68px]">
    <div className="w-[604px] border-r-2 border-b-2 border-[#808080] pr-1">
      <output className="flex h-16 items-center whitespace-pre border-2 border-t-[#808080] border-l-[#808080] border-r-white border-b-white bg-[#55f658] pt-0.5 pl-1">
        {'DF:23  ST:11, 11  BR:3270  DL:1'}
      </output>
    </div>
    <div className="flex flex-1 gap-2">
      {toolGroups.map((tools, i) => (
        <div key={i} className="flex">
          {tools.map((t) => <ToolButton key={t.label} {...t} />)}
        </div>
      ))}
    </div>
    <div className="flex">
      <ToolButton label="<" width="w-8" />
      <ToolButton label=">" width="w-8" />
    </div>
  </div>
);

const Tab = ({ label, width, active }: { label: string; width: string; active?: boolean }) => (
  <button
    role="tab"
    aria-selected={!!active}
    className={`${width} flex h-full items-center whitespace-pre border-2 pt-1 pl-[5px]
      ${active
        ? 'border-t-[#808080] border-l-[#808080] border-r-white border-b-white bg-[#0b2468] text-white'
        : 'border-t-transparent border-l-white border-r-[#808080] border-b-[#808080]'}
    `}
  >
    {label}
  </button>
);

const ScrollButton = ({ label, d }: { label: string; d?: string }) => (
  <button aria-label={label} className="size-8 border-2 border-t-[#e4e4e4] border-l-[#e4e4e4] border-r-[#404040] border-b-[#404040] bg-[#e4e4e4]">
    <span className="flex size-7 items-center justify-center border-2 border-t-white border-l-white border-r-[#808080] border-b-[#808080]">
      {d && <svg className="mr-0.5" width="8" height="14" viewBox="0 0 8 14"><path d={d} /></svg>}
    </span>
  </button>
);

const ChartArea = ({ percent }: { percent: number }) => (
  <main className="flex flex-1 flex-col border-2 border-t-[#808080] border-l-[#808080] border-r-white border-b-white">
    <div className="flex flex-1 flex-col border-2 border-t-[#404040] border-l-[#404040] border-r-[#e4e4e4] border-b-[#e4e4e4] bg-white">
      <div className={`${ARIAL} flex flex-1 flex-col pr-[132px] text-[25px] leading-[30px]`}>
        <p className="pl-3.5">Calculating Studies...</p>
        <button className="mx-auto mt-[496px] flex w-[316px] flex-col border-2 border-black text-center text-2xl leading-[30px]">
          <span className="w-full border-b-2 border-black pt-[9px] pb-[7px]">
            <span className="block">Loading: {percent}%</span>
            <span className="block">CLG21_FUT_NYMEX.scid</span>
            <span className="block">Click to cancel</span>
          </span>
          <span role="progressbar" aria-label="Loading" aria-valuenow={percent} className="block h-6 w-full p-0.5">
            <span className="block h-5 bg-black" style={{ width: `${percent}%` }} />
          </span>
        </button>
        <p className="mx-auto mt-[216px] w-[424px] bg-[#ffe135] pt-2.5 pb-2 text-center">Waiting to Download Historical Data</p>
      </div>
      <div className={`flex h-8 ${DITHER}`}>
        <ScrollButton label="Scroll left" d="M7 0 V14 L0 7Z" />
        <div className="flex-1" />
        <ScrollButton label="Scroll thumb" />
        <ScrollButton label="Scroll right" d="M1 0 V14 L8 7Z" />
      </div>
    </div>
  </main>
);

export default function App() {
  return (
    <div className="flex min-h-screen flex-col bg-linear-to-b from-[#1f4079] to-[#07131b]">
      <MenuBar />
      <section className={`${UI} mt-0.5 flex flex-1 flex-col overflow-hidden rounded-[10px] bg-[#e4e4e4] text-[21px] text-black`}>
        <TitleBar />
        <AppMenu />
        <Toolbar />
        <div role="tablist" aria-label="Chartbooks" className="flex h-[42px]">
          <Tab label="G7FXFOUNDATIONDOMCHARTBOOKupdatedSeptember2020200625173057-200921-171804" width="w-[906px]" />
          <Tab label="gregCL" width="w-[83px]" active />
        </div>
        <ChartArea percent={11.4} />
        <div role="tablist" aria-label="Charts" className="flex h-[42px] bg-linear-to-b from-[#e1e1e1] to-[#d4d4d4]">
          <Tab label="G7FX CUSTOM CRUDE OIL Futures Footprint" width="w-[444px]" />
          <Tab label="DAY VWAP (CL)" width="w-[166px]" active />
          <Tab label="Market Profile Blocks (CL)" width="w-[258px]" />
          <Tab label="CLG21_FUT_NYMEX  #1" width="w-[246px]" />
        </div>
      </section>
      <Dock />
    </div>
  );
}
